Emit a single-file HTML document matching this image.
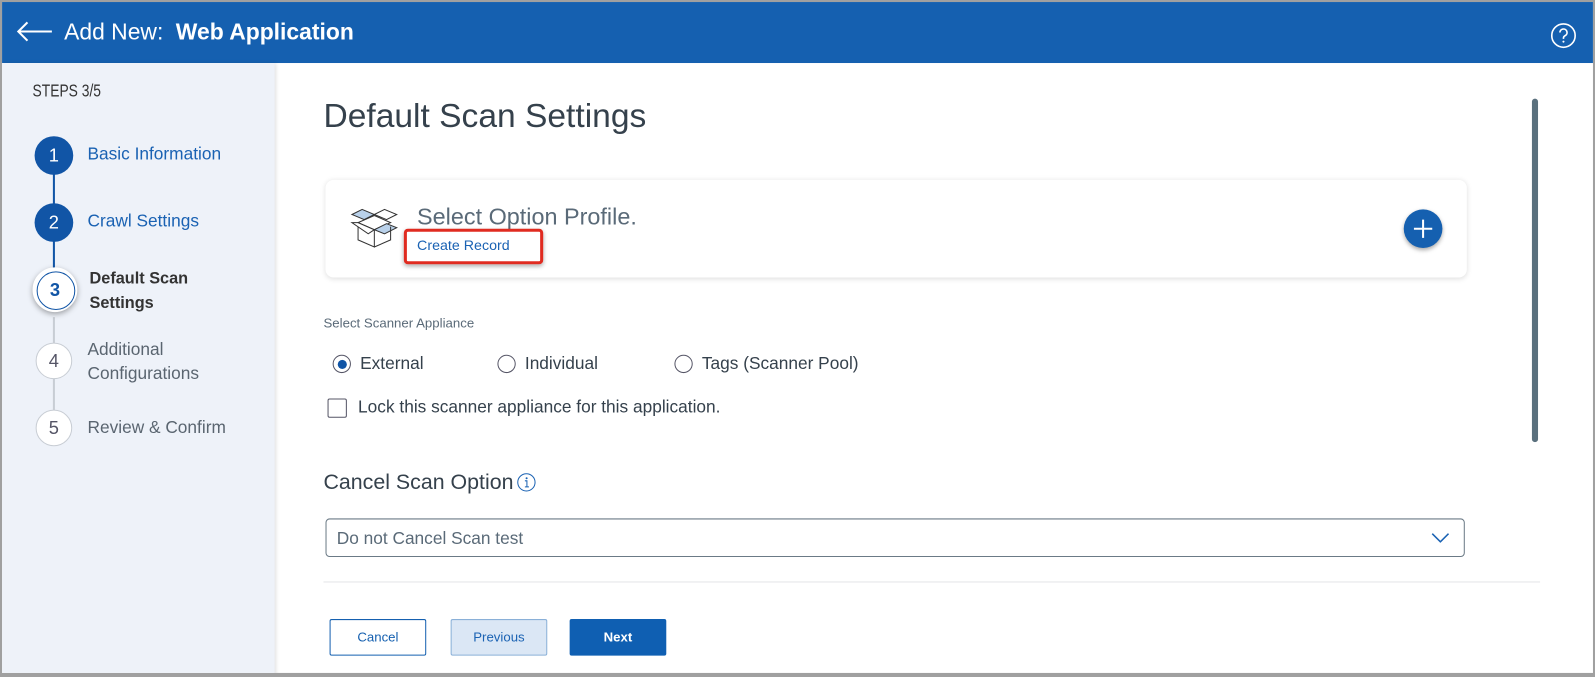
<!DOCTYPE html>
<html><head><meta charset="utf-8"><style>
*{box-sizing:border-box;margin:0;padding:0}
body{width:1595px;height:677px;overflow:hidden;font-family:"Liberation Sans",sans-serif;background:#a0a0a0;position:relative}
.root{position:absolute;left:0;top:0;width:1568px;height:666px;transform:scale(1.01722,1.01652);transform-origin:0 0}
.frame{position:absolute;left:2px;top:2px;width:1564px;height:660px;background:#fff;overflow:hidden}
.hdr{position:absolute;left:0;top:0;width:1564px;height:60px;background:#1560b0;color:#fff}
.hdr .t{position:absolute;left:61px;top:17px;font-size:22.5px}
.hdr .t b{margin-left:6px}
.side{position:absolute;left:0;top:60px;width:268px;height:612px;background:#eef2f9;box-shadow:2px 0 4px rgba(0,0,0,.12)}
.abs{position:absolute}
.steps{left:30px;top:18px;font-size:17px;color:#333;transform:scaleX(.8);transform-origin:left}
.c{position:absolute;border-radius:50%;width:38px;height:38px;text-align:center;line-height:38px;font-size:18px}
.c.done{background:#1155a6;color:#fff}
.c.todo{background:#fff;border:1px solid #c8cdd4;color:#556;width:36px;height:36px;line-height:34px}
.c.cur{background:#fff;border:2px solid #fff;box-shadow:0 2px 6px rgba(0,0,0,.35);width:44px;height:44px;line-height:40px;color:#1155a6;font-weight:bold}
.c.cur:after{content:"";position:absolute;left:2px;top:2px;width:36px;height:36px;border:1px solid #1155a6;border-radius:50%}
.ln{position:absolute;width:2px}
.lbl{position:absolute;font-size:17px;line-height:24px}
.card{position:absolute;left:318px;top:175px;width:1122px;height:96px;border-radius:8px;background:#fff;box-shadow:0 1px 5px rgba(0,0,0,.13)}
.radio{position:absolute;width:18px;height:18px;border:1px solid #556;border-radius:50%}
.radio.on:after{content:"";position:absolute;left:3.5px;top:3.5px;width:9px;height:9px;border-radius:50%;background:#1155a6}
.rt{position:absolute;font-size:17px;color:#35414c;white-space:nowrap}
.btn{position:absolute;top:607px;height:36px;font-size:13px;text-align:center;line-height:34px;border-radius:2px}
</style></head><body>
<div class="root">
<div class="frame">
<div class="hdr">
<svg class="abs" style="left:14px;top:18px" width="36" height="22" viewBox="0 0 36 22"><path d="M35 11H2M11 2L2 11l9 9" stroke="#fff" stroke-width="2" fill="none"/></svg>
<div class="t">Add New: <b>Web Application</b></div>
<svg class="abs" style="left:1522px;top:20px" width="26" height="26" viewBox="0 0 26 26"><circle cx="13" cy="13" r="11.5" stroke="#fff" stroke-width="1.6" fill="none"/><path d="M9.5 10a3.5 3.5 0 1 1 5 3.2c-1 .5-1.5 1.2-1.5 2.3v.8" stroke="#fff" stroke-width="1.6" fill="none"/><circle cx="13" cy="19" r="1" fill="#fff"/></svg>
</div>
<div class="side">
<div class="abs steps">STEPS 3/5</div>
<div class="ln" style="left:50px;top:100px;height:70px;background:#1155a6"></div>
<div class="ln" style="left:50px;top:170px;height:50px;background:#1155a6"></div>
<div class="ln" style="left:50px;top:250px;height:110px;background:#c8cdd4"></div>
<div class="c done" style="left:32px;top:72px">1</div>
<div class="lbl" style="left:84px;top:78px;color:#1a62b3">Basic Information</div>
<div class="c done" style="left:32px;top:138px">2</div>
<div class="lbl" style="left:84px;top:144px;color:#1a62b3">Crawl Settings</div>
<div class="c cur" style="left:30px;top:201px">3</div>
<div class="lbl" style="left:86px;top:201px;color:#333;font-weight:bold;font-size:16px">Default Scan<br>Settings</div>
<div class="c todo" style="left:33px;top:275px">4</div>
<div class="lbl" style="left:84px;top:270px;color:#5a6570">Additional<br>Configurations</div>
<div class="c todo" style="left:33px;top:341px">5</div>
<div class="lbl" style="left:84px;top:347px;color:#5a6570">Review &amp; Confirm</div>
</div>
<div class="abs" style="left:316px;top:93px;font-size:33px;color:#35414c">Default Scan Settings</div>
<div class="card">
<svg class="abs" style="left:24px;top:28px" width="48" height="40" viewBox="0 0 48 40"><path d="M2 6l10-5 12 5-10 5z" fill="#b9d1ea" stroke="#333"/><path d="M24 6l10-5 12 5-10 5z" fill="#fff" stroke="#333"/><path d="M8 14l16-7 16 7-16 7z" fill="#fff" stroke="#333"/><path d="M24 21l12-6 10 4-12 6z" fill="#b9d1ea" stroke="#333"/><path d="M2 14l6 0 16 7-6 4z" fill="#fff" stroke="#333"/><path d="M8 18v13l16 7V21M40 18v13l-16 7" fill="none" stroke="#333"/></svg>
<div class="abs" style="left:90px;top:23px;font-size:23px;color:#5a6a78">Select Option Profile.</div>
<div class="abs" style="left:77px;top:48px;width:137px;height:35px;border:3px solid #e02b20;border-radius:4px;box-shadow:0 2px 4px rgba(0,0,0,.3)"></div>
<div class="abs" style="left:90px;top:56px;font-size:14px;color:#1a62b3">Create Record</div>
<div class="abs" style="left:1060px;top:29px;width:38px;height:38px;border-radius:50%;background:#1560b0;box-shadow:0 2px 4px rgba(0,0,0,.35)"><svg width="38" height="38"><path d="M19 10v18M10 19h18" stroke="#fff" stroke-width="2"/></svg></div>
</div>
<div class="abs" style="left:1504px;top:95px;width:6px;height:338px;border-radius:3px;background:#5a707d"></div>
<div class="abs" style="left:316px;top:308px;font-size:13px;color:#5a6a78">Select Scanner Appliance</div>
<div class="radio on" style="left:325px;top:347px"></div><div class="rt" style="left:352px;top:346px">External</div>
<div class="radio" style="left:487px;top:347px"></div><div class="rt" style="left:514px;top:346px">Individual</div>
<div class="radio" style="left:661px;top:347px"></div><div class="rt" style="left:688px;top:346px">Tags (Scanner Pool)</div>
<div class="abs" style="left:320px;top:390px;width:19px;height:19px;border:1px solid #556;border-radius:2px"></div>
<div class="abs" style="left:350px;top:389px;font-size:17px;color:#35414c">Lock this scanner appliance for this application.</div>
<div class="abs" style="left:316px;top:461px;font-size:21px;color:#35414c">Cancel Scan Option</div>
<svg class="abs" style="left:506px;top:463px" width="19" height="19"><circle cx="9.5" cy="9.5" r="8.5" fill="none" stroke="#1a62b3"/><path d="M8 8h2v6M8 14h4" stroke="#1a62b3" fill="none"/><circle cx="9.7" cy="5.5" r="1" fill="#1a62b3"/></svg>
<div class="abs" style="left:318px;top:508px;width:1120px;height:38px;border:1px solid #6b7a86;border-radius:4px;font-size:17px;color:#5a6a78;padding:9px 10px">Do not Cancel Scan test
<svg class="abs" style="left:1086px;top:13px" width="18" height="10"><path d="M1 1l8 8 8-8" stroke="#1a62b3" stroke-width="1.5" fill="none"/></svg></div>
<div class="abs" style="left:316px;top:570px;width:1196px;height:1px;background:#e3e5e8"></div>
<div class="btn" style="left:322px;width:95px;border:1px solid #1560b0;color:#1560b0;background:#fff">Cancel</div>
<div class="btn" style="left:441px;width:95px;border:1px solid #8ab0d8;color:#1a62b3;background:#dbe7f5">Previous</div>
<div class="btn" style="left:558px;width:95px;background:#0f5fb2;color:#fff;font-weight:bold;line-height:36px">Next</div>
</div>
</div>
</body></html>
